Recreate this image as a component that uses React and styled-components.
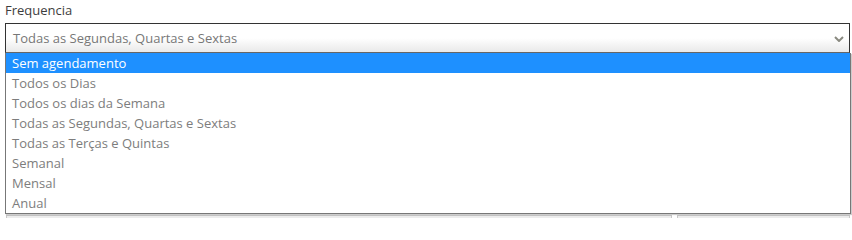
import React from "react";
import styled, { createGlobalStyle } from "styled-components";

const Global = createGlobalStyle`
  html, body { margin: 0; padding: 0; background: #fff; }
  body { font-family: "Open Sans", "Noto Sans", sans-serif; }
`;

const Page = styled.div`
  position: relative;
  width: 852px;
  height: 218px;
  overflow: hidden;
  padding: 0 2px 0 5px;
  box-sizing: border-box;
  display: flex;
  flex-direction: column;
  & > * { flex-shrink: 0; }
`;

const Label = styled.label`
  display: block;
  font-size: 13px;
  line-height: 20px;
  padding-top: 0px;
  color: #3d3d3d;
  height: 23px;
`;

const Field = styled.div`
  position: relative;
`;

const SelectBox = styled.div`
  box-sizing: border-box;
  height: 30px;
  border: 1px solid #333;
  border-bottom: 1px solid #666;
  background: linear-gradient(#ffffff 0%, #ffffff 50%, #e9e9e9 100%);
  display: flex;
  align-items: center;
  justify-content: space-between;
  padding: 0 5px 0 7px;
  font-size: 13px;
  color: #777;
`;

const Chevron = styled.svg`
  width: 10px;
  height: 6px;
  margin-top: 2px;
`;

const Menu = styled.ul`
  position: absolute;
  left: 0;
  top: 30px;
  width: 846px;
  box-sizing: border-box;
  margin: 0;
  padding: 0;
  list-style: none;
  background: #fff;
  border: 1px solid #777;
  border-top: none;
  box-shadow: 1px 1px 1px rgba(0,0,0,0.2);
  z-index: 2;
`;

const Option = styled.li`
  height: 20px;
  line-height: 20px;
  padding-left: 6px;
  font-size: 13px;
  color: ${(p) => (p.$active ? "#fff" : "#7d7d7d")};
  background: ${(p) => (p.$active ? "#1e90ff" : "transparent")};
`;

const Below = styled.div`
  display: flex;
  gap: 5px;
  margin-top: 162px;
  padding-left: 1px;
`;

const GhostInput = styled.div`
  flex: ${(p) => p.$flex};
  height: 10px;
  background: #ececec;
  border: 1px solid #c8c8c8;
`;

const options = [
  "Sem agendamento",
  "Todos os Dias",
  "Todos os dias da Semana",
  "Todas as Segundas, Quartas e Sextas",
  "Todas as Terças e Quintas",
  "Semanal",
  "Mensal",
  "Anual",
];

export default function App() {
  return (
    <>
      <Global />
      <Page>
        <Label>Frequencia</Label>
        <Field>
          <SelectBox>
            <span>Todas as Segundas, Quartas e Sextas</span>
            <Chevron viewBox="0 0 10 6">
              <path d="M1 1 L5 5 L9 1" fill="none" stroke="#8a8a80" strokeWidth="2" />
            </Chevron>
          </SelectBox>
          <Menu>
            {options.map((o, i) => (
              <Option key={o} $active={i === 0}>{o}</Option>
            ))}
          </Menu>
        </Field>
        <Below>
          <GhostInput $flex="0 0 664px" />
          <GhostInput $flex="1" />
        </Below>
      </Page>
    </>
  );
}
